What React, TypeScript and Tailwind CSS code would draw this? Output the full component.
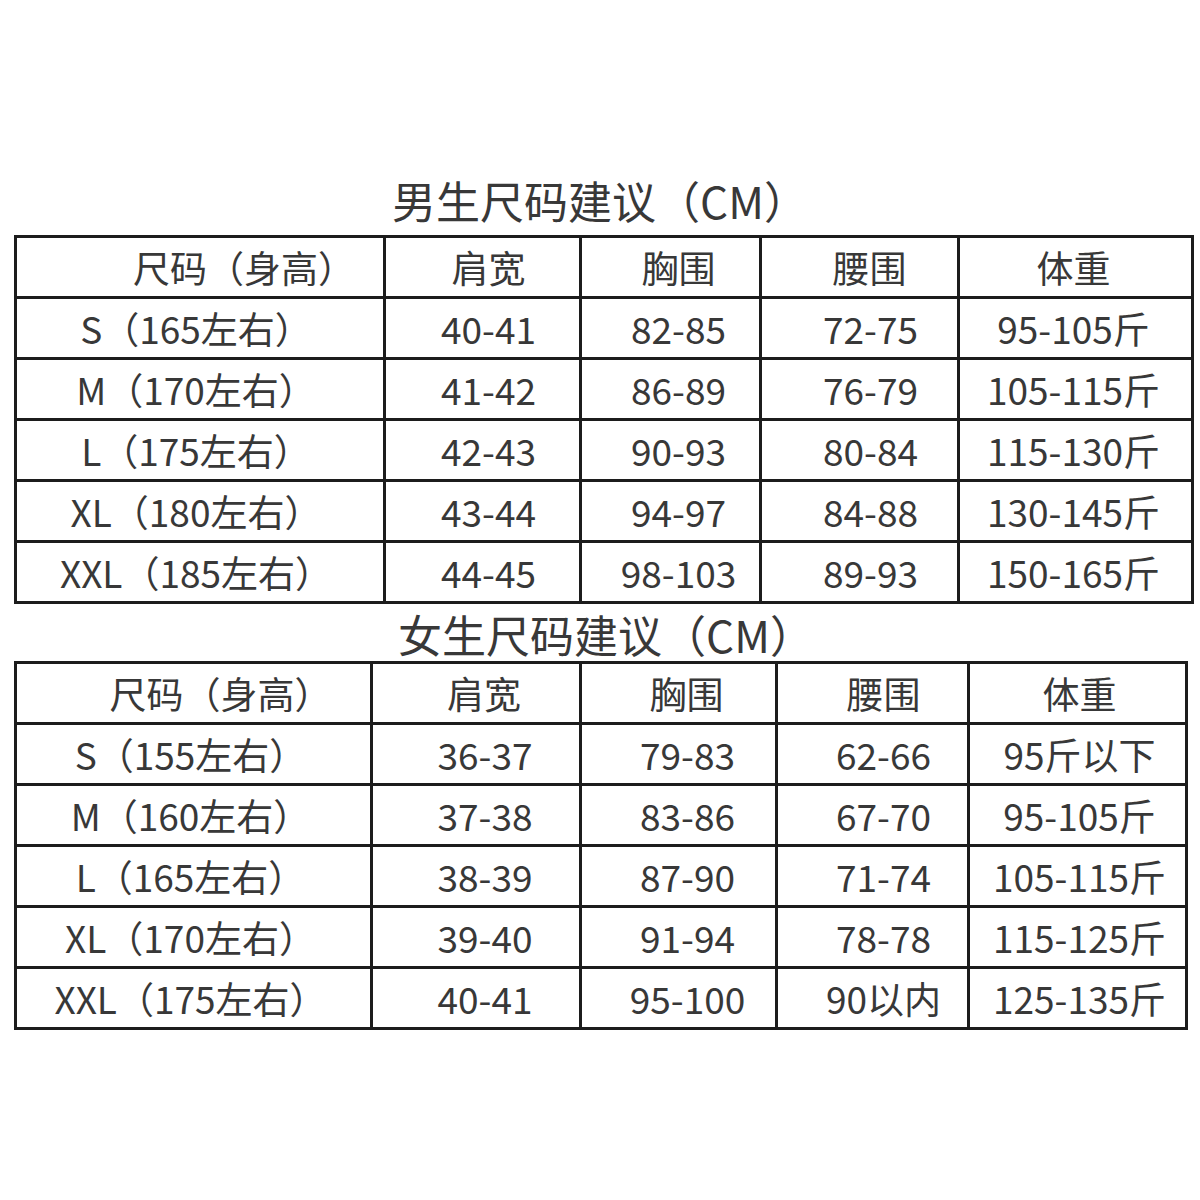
const men = [
  ['S（165左右）', '40-41', '82-85', '72-75', '95-105斤'],
  ['M（170左右）', '41-42', '86-89', '76-79', '105-115斤'],
  ['L（175左右）', '42-43', '90-93', '80-84', '115-130斤'],
  ['XL（180左右）', '43-44', '94-97', '84-88', '130-145斤'],
  ['XXL（185左右）', '44-45', '98-103', '89-93', '150-165斤'],
]

const women = [
  ['S（155左右）', '36-37', '79-83', '62-66', '95斤以下'],
  ['M（160左右）', '37-38', '83-86', '67-70', '95-105斤'],
  ['L（165左右）', '38-39', '87-90', '71-74', '105-115斤'],
  ['XL（170左右）', '39-40', '91-94', '78-78', '115-125斤'],
  ['XXL（175左右）', '40-41', '95-100', '90以内', '125-135斤'],
]

const head = ['尺码（身高）', '肩宽', '胸围', '腰围', '体重']

const font = { fontFamily: '"Noto Sans CJK SC", "Noto Sans", sans-serif' }

// per column: header shift, body shift (padding nudges to match the original's off-centre text)
const menPad = [
  ['pl-[88px]', 'pr-[8px]'],
  ['pl-[12px]', 'pl-[12px]'],
  ['pl-[16px]', 'pl-[16px]'],
  ['pl-[20px]', 'pl-[22px]'],
  ['pr-[4px]', 'pr-[4px]'],
]

const womenPad = [
  ['pl-[54px]', 'pr-[6px]'],
  ['pl-[16px]', 'pl-[18px]'],
  ['pl-[16px]', 'pl-[18px]'],
  ['pl-[22px]', 'pl-[22px]'],
  ['pl-[4px]', 'pl-[4px]'],
]

function Cell({ text, pad }: { text: string; pad: string }) {
  return (
    <div
      className={`flex h-[61px] items-center justify-center whitespace-nowrap border-b-[3px] border-r-[3px] border-[#1c1c1c] text-[37px] leading-none text-[#383838] ${pad}`}
    >
      {text}
    </div>
  )
}

function SizeTable({
  rows,
  cols,
  pads,
}: {
  rows: string[][]
  cols: string
  pads: string[][]
}) {
  return (
    <div className={`ml-[14px] grid border-l-[3px] border-t-[3px] border-[#1c1c1c] ${cols}`}>
      {head.map((h, i) => (
        <Cell key={h} text={h} pad={pads[i][0]} />
      ))}
      {rows.map((r) =>
        r.map((c, i) => <Cell key={r[0] + i} text={c} pad={pads[i][1]} />)
      )}
    </div>
  )
}

export default function App() {
  return (
    <div className="h-[1200px] w-[1200px] bg-white pt-[172px]" style={font}>
      <div className="flex h-[56px] items-center justify-center text-[44px] leading-none text-[#383838]">
        男生尺码建议（CM）
      </div>
      <div className="h-[7px]" />
      <SizeTable
        rows={men}
        cols="w-[1180px] grid-cols-[369px_196px_180px_198px_234px]"
        pads={menPad}
      />
      <div className="mt-[2px] flex h-[55px] items-center justify-center pl-[12px] text-[44px] leading-none text-[#383838]">
        女生尺码建议（CM）
      </div>
      <SizeTable
        rows={women}
        cols="w-[1174px] grid-cols-[356px_209px_196px_192px_218px]"
        pads={womenPad}
      />
    </div>
  )
}
